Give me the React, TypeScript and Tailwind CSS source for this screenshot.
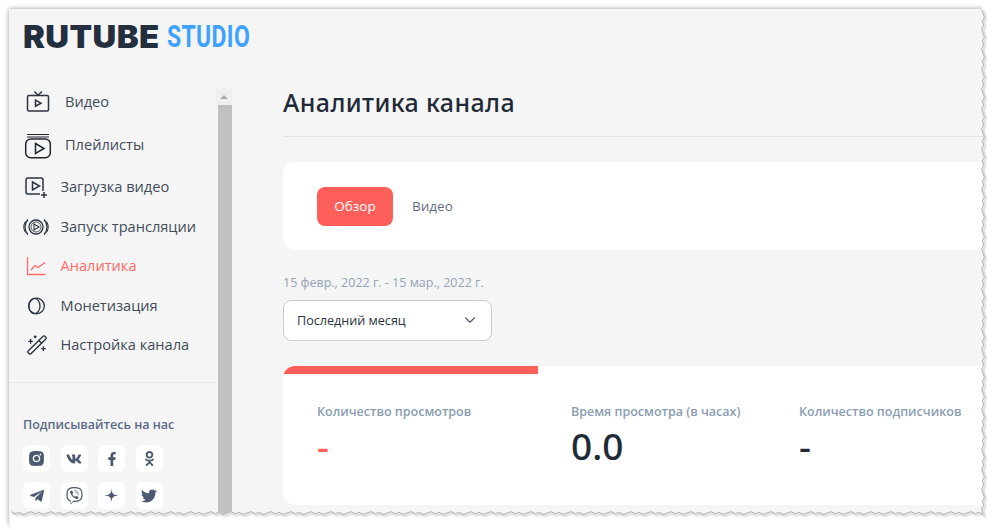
import { WandSparkles, ChevronDown } from 'lucide-react'
import { AiFillInstagram } from 'react-icons/ai'
import { FaVk, FaFacebookF, FaOdnoklassniki, FaTelegramPlane, FaViber, FaTwitter } from 'react-icons/fa'

const TvIcon = () => (
  <svg width="30" height="28" viewBox="0 0 30 28" fill="none" stroke="#2b3440" strokeWidth="1.5">
    <rect x="4.5" y="7.5" width="21" height="15.5" rx="1.5" />
    <path d="M11.5 3.5 15 7.2 19 3.5" />
    <path d="M12.5 12.2 18 15.2 12.5 18.2Z" />
  </svg>
)

const PlaylistIcon = () => (
  <svg width="30" height="28" viewBox="0 0 30 28" fill="none" stroke="#1f2630" strokeWidth="1.5">
    <path d="M4 3.5H26M4 6H26" strokeWidth="1" />
    <rect x="2.7" y="8" width="24.6" height="18.8" rx="5" />
    <path d="M12.5 12.5 21 17.5 12.5 22.5Z" />
  </svg>
)

const UploadIcon = () => (
  <svg width="30" height="28" viewBox="0 0 30 28" fill="none" stroke="#2b3440" strokeWidth="1.5">
    <path d="M17 21H5a2 2 0 0 1-2-2V7a2 2 0 0 1 2-2h13a2 2 0 0 1 2 2v11" />
    <path d="M9.5 9 16.5 13 9.5 17Z" />
    <path d="M21 19v6M18 22h6" />
  </svg>
)

const LiveIcon = () => (
  <svg width="30" height="28" viewBox="0 0 30 28" fill="none" stroke="#2b3440" strokeWidth="1.3">
    <circle cx="13" cy="14" r="7" />
    <circle cx="13" cy="14" r="5" strokeWidth="0.8" />
    <path d="M11 11 16 14 11 17Z" strokeWidth="1.1" />
    <path d="M5 6.5C1 10.5 1 17.5 5 21.5M21 6.5c4 4 4 11 0 15" />
    <path d="M2.5 8.5C.2 11.5.2 16.5 2.5 19.5M23.5 8.5c2.3 3 2.3 8 0 11" strokeWidth="1" />
  </svg>
)

const ChartIcon = () => (
  <svg width="30" height="28" viewBox="0 0 30 28" fill="none" stroke="#ff6b66" strokeWidth="1.3">
    <path d="M4.5 5V22.5H22.5" />
    <path d="M8 18 12 13.5 15 15.5 22 10.5" />
  </svg>
)

const CoinIcon = () => (
  <svg width="30" height="28" viewBox="0 0 30 28" fill="none" stroke="#2b3440" strokeWidth="1.3">
    <circle cx="13.5" cy="14" r="7.8" />
    <ellipse cx="11.4" cy="14" rx="5.6" ry="7.7" />
  </svg>
)

const ZenIcon = () => (
  <svg width="15" height="15" viewBox="0 0 14 14" fill="#4b5a70">
    <path d="M7 0C7.1 5 8.5 6.8 14 7 8.5 7.2 7.1 9 7 14 6.9 9 5.5 7.2 0 7 5.5 6.8 6.9 5 7 0Z" />
  </svg>
)

const navItems = [
  { label: 'Видео', icon: <TvIcon />, box: 'w-[42px]', row: 'mt-0', text: 'text-[#414b59]' },
  { label: 'Плейлисты', icon: <PlaylistIcon />, box: 'w-[42px]', row: 'mt-[15px]', text: 'text-[#414b59]' },
  { label: 'Загрузка видео', icon: <UploadIcon />, box: 'w-[37.5px]', row: 'mt-[14px]', text: 'text-[#414b59]' },
  { label: 'Запуск трансляции', icon: <LiveIcon />, box: 'w-[37.5px]', row: 'mt-[12px]', text: 'text-[#414b59]' },
  { label: 'Аналитика', icon: <ChartIcon />, box: 'w-[37.5px]', row: 'mt-[11px]', text: 'text-[#ff6b66]' },
  { label: 'Монетизация', icon: <CoinIcon />, box: 'w-[37.5px]', row: 'mt-[12px]', text: 'text-[#414b59]' },
  {
    label: 'Настройка канала',
    icon: <WandSparkles size={22} strokeWidth={1.5} color="#2b3440" className="ml-[3px]" />,
    box: 'w-[37.5px]',
    row: 'mt-[11px]',
    text: 'text-[#414b59]',
  },
]

const socials = [
  <AiFillInstagram size={19} color="#4b5a70" />,
  <FaVk size={16} color="#4b5a70" />,
  <FaFacebookF size={14} color="#4b5a70" />,
  <FaOdnoklassniki size={15} color="#4b5a70" />,
  <FaTelegramPlane size={16} color="#4b5a70" />,
  <FaViber size={17} color="#4b5a70" />,
  <ZenIcon />,
  <FaTwitter size={16} color="#4b5a70" />,
]

const stats = [
  { label: 'Количество просмотров', value: '-', box: 'w-[255px]', tone: 'text-[#ff5f5a]', active: true },
  { label: 'Время просмотра (в часах)', value: '0.0', box: 'w-[228px]', tone: 'text-[#1f2a37]', active: false },
  { label: 'Количество подписчиков', value: '-', box: 'w-[220px]', tone: 'text-[#1f2a37]', active: false },
]

// torn paper edge of the screenshot, right and bottom
const jag = (i: number) => ((i * 7) % 5) * 0.7 - 1.4
const tornRight = Array.from({ length: 126 }, (_, i) => `${983 + jag(i)},${9 + i * 4}`)
const tornBottom = Array.from({ length: 244 }, (_, i) => `${983 - i * 4},${513 + jag(i + 2)}`)
const tornLine = [...tornRight, ...tornBottom].join(' ')

export default function App() {
  return (
    <div className="relative w-[1000px] h-[530px] overflow-hidden bg-white pl-[9px] pt-[9px] font-['Open_Sans',sans-serif]">
      <div className="w-[985px] h-[515px] bg-[#f5f5f5] shadow-[0_0_5px_rgba(0,0,0,0.4)] flex flex-col overflow-hidden">
        <header className="h-[79px] shrink-0 pl-[14px] pt-[9px] flex items-start">
          <span className="w-[144px] shrink-0 inline-block origin-left scale-x-[1.06] font-['Inter',sans-serif] font-black text-[31px] leading-[38px] tracking-[0.4px] text-[#232f3e]">
            RUTUBE
          </span>
          <span className="inline-block origin-left scale-x-[0.74] font-['Roboto',sans-serif] font-bold text-[31px] leading-[38px] tracking-[0.5px] text-[#3fa2ff]">
            STUDIO
          </span>
        </header>

        <div className="flex flex-1 min-h-0">
          <aside className="w-[223px] shrink-0 flex">
            <div className="w-[207px] shrink-0">
              <nav className="flex flex-col pl-[14px]">
                {navItems.map((item) => (
                  <div key={item.label} className={`flex items-center h-[28px] ${item.row}`}>
                    <div className={`${item.box} shrink-0 flex items-center`}>{item.icon}</div>
                    <span className={`text-[14.6px] ${item.text}`}>{item.label}</span>
                  </div>
                ))}
              </nav>
              <div className="mt-[23px] h-px bg-[#e6e7ea]" />
              <div className="pl-[14px] pt-[33px]">
                <div className="text-[12.5px] leading-[18px] font-semibold text-[#5a6b85]">Подписывайтесь на нас</div>
                <div className="mt-[11px] grid grid-cols-[27px_27px_27px_27px] gap-x-[10.5px] gap-y-[10px]">
                  {socials.map((icon, i) => (
                    <div key={i} className="w-[27px] h-[27px] rounded-md bg-white flex items-center justify-center">
                      {icon}
                    </div>
                  ))}
                </div>
              </div>
            </div>
            <div className="w-[16px] shrink-0 flex flex-col">
              <div className="h-[17px] bg-[#efefef] flex items-center justify-center">
                <div className="w-0 h-0 border-x-[4px] border-x-transparent border-b-[4px] border-b-[#a8a8a8]" />
              </div>
              <div className="flex-1 ml-[2px] bg-[#c1c1c1]" />
            </div>
          </aside>

          <main className="flex-1 min-w-0 pl-[51px]">
            <h1 className="h-[48px] text-[25px] leading-[29px] font-medium tracking-[0.4px] text-[#1f2a37] font-['Noto_Sans',sans-serif]">
              Аналитика канала
            </h1>
            <div className="h-px bg-[#e3e5e9]" />

            <div className="mt-[25px] h-[88px] bg-white rounded-l-xl pl-[34px] flex items-center gap-[19px]">
              <button className="w-[76px] h-[39px] rounded-lg bg-[#ff5f5a] text-white text-[13.5px]">Обзор</button>
              <span className="text-[13.5px] text-[#5f6d82]">Видео</span>
            </div>

            <div className="mt-[24px] text-[12.5px] leading-[18px] text-[#93a3b5]">15 февр., 2022 г. - 15 мар., 2022 г.</div>
            <div className="mt-[8px] w-[209px] h-[41px] bg-white border border-[#c6cdd8] rounded-lg pl-[13px] pr-[12px] flex items-center justify-between text-[12.6px] text-[#2b3440]">
              <span className="pt-[1px]">Последний месяц</span>
              <ChevronDown size={18} strokeWidth={1.5} color="#4b5a70" className="-mt-[2px]" />
            </div>

            <div className="mt-[25px] h-[139px] bg-white rounded-l-xl overflow-hidden flex">
              {stats.map((stat) => (
                <div key={stat.label} className={`${stat.box} shrink-0`}>
                  <div className={`h-[8px] ${stat.active ? 'bg-[#ff5f5a]' : 'bg-white'}`} />
                  <div className={`${stat.active ? 'pl-[34px]' : 'pl-[33px]'} pt-[29px]`}>
                    <div className="text-[12.5px] leading-[18px] font-semibold text-[#8a9db2] whitespace-nowrap">{stat.label}</div>
                    <div className={`mt-[1px] text-[37px] leading-[48px] font-medium font-['Noto_Sans',sans-serif] ${stat.tone}`}>
                      {stat.value}
                    </div>
                  </div>
                </div>
              ))}
            </div>
          </main>
        </div>
      </div>

      <svg className="absolute inset-0 pointer-events-none" width="1000" height="530" viewBox="0 0 1000 530">
        <polygon points={`${tornLine} 9,540 1000,540 1000,0 983,0`} fill="#ffffff" />
        <polyline points={tornLine} transform="translate(1.5 1.5)" fill="none" stroke="#e2e2e2" strokeWidth="3" />
        <polyline points={tornLine} fill="none" stroke="#b5b5b5" strokeWidth="1" />
      </svg>
    </div>
  )
}
